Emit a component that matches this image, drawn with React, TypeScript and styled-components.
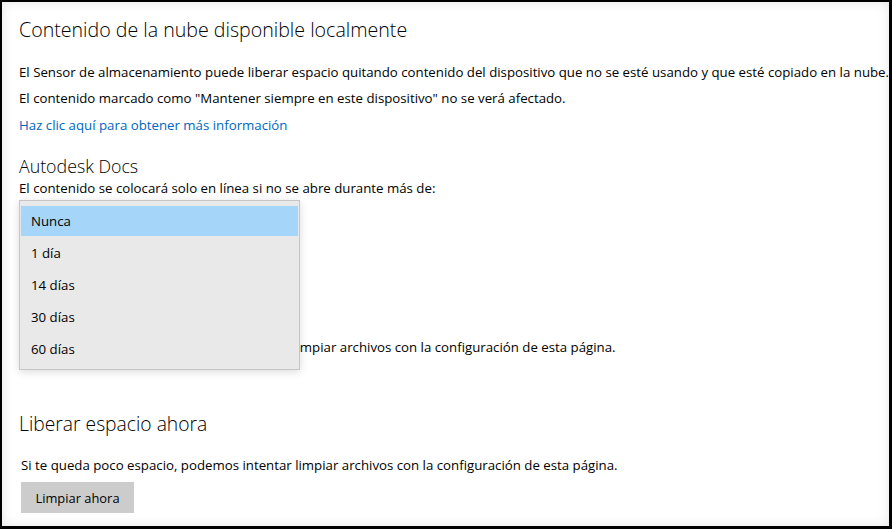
import React from "react";
import styled, { createGlobalStyle } from "styled-components";

const Global = createGlobalStyle`
  html, body { margin: 0; padding: 0; background: #fff; }
  body { font-family: "Open Sans", "Noto Sans", sans-serif; color: #000; }
`;

const Frame = styled.div`
  width: 892px;
  height: 529px;
  box-sizing: border-box;
  border-style: solid;
  border-color: #000;
  border-width: 2px 3px 3px 2px;
  overflow: hidden;
`;

const Page = styled.div`
  height: 100%;
  box-sizing: border-box;
  padding: 14px 0 0 17px;
  background: #fff;
  box-shadow: inset 0 0 12px rgba(0, 0, 0, 0.1);
  display: flex;
  flex-direction: column;
  align-items: flex-start;
`;

const Title = styled.h1<{ $top?: number; $size?: number }>`
  margin: ${(p) => p.$top ?? 0}px 0 0;
  font-size: ${(p) => p.$size ?? 19.6}px;
  line-height: 28px;
  font-weight: 300;
  white-space: nowrap;
`;

const SubTitle = styled.h2<{ $top?: number }>`
  margin: ${(p) => p.$top ?? 0}px 0 0;
  font-size: 17.8px;
  line-height: 24px;
  font-weight: 300;
  white-space: nowrap;
`;

const Text = styled.p<{ $top?: number; $indent?: number }>`
  margin: ${(p) => p.$top ?? 0}px 0 0 ${(p) => p.$indent ?? 0}px;
  font-size: 13.25px;
  line-height: 20px;
  white-space: nowrap;
`;

const Link = styled.a<{ $top?: number }>`
  margin-top: ${(p) => p.$top ?? 0}px;
  font-size: 13.25px;
  line-height: 20px;
  color: #0067c0;
  text-decoration: none;
  white-space: nowrap;
`;

const ComboWrap = styled.div<{ $top?: number }>`
  position: relative;
  margin-top: ${(p) => p.$top ?? 0}px;
  z-index: 2;
`;

const Combo = styled.div`
  width: 280px;
  height: 32px;
  box-sizing: border-box;
  border: 2px solid #999;
  background: #fff;
`;

const Menu = styled.ul`
  position: absolute;
  left: 0;
  top: -4px;
  width: 281px;
  margin: 0;
  padding: 5px 1px;
  box-sizing: border-box;
  list-style: none;
  background: #e9e9e9;
  border: 1px solid #c6c6c6;
  box-shadow: 0 2px 8px rgba(0, 0, 0, 0.14);
  display: flex;
  flex-direction: column;
  gap: 2px;
`;

const Item = styled.li<{ $selected?: boolean }>`
  height: 30px;
  line-height: 30px;
  padding-left: 10px;
  font-size: 13.25px;
  background: ${(p) => (p.$selected ? "#a6d5fa" : "transparent")};
  color: #000;
`;

const Button = styled.button<{ $top?: number }>`
  margin: ${(p) => p.$top ?? 0}px 0 0 2px;
  width: 113px;
  height: 31px;
  padding: 0;
  border: none;
  background: #cccccc;
  font-family: "Open Sans", "Noto Sans", sans-serif;
  font-size: 12.9px;
  color: #000;
`;

const options = ["Nunca", "1 día", "14 días", "30 días", "60 días"];

export default function App() {
  return (
    <>
      <Global />
      <Frame>
        <Page>
          <Title>Contenido de la nube disponible localmente</Title>
          <Text $top={18}>
            El Sensor de almacenamiento puede liberar espacio quitando contenido del dispositivo que no se esté usando y que esté copiado en la nube.
          </Text>
          <Text $top={6}>
            El contenido marcado como "Mantener siempre en este dispositivo" no se verá afectado.
          </Text>
          <Link $top={7} href="#">
            Haz clic aquí para obtener más información
          </Link>
          <SubTitle $top={19}>Autodesk Docs</SubTitle>
          <Text>El contenido se colocará solo en línea si no se abre durante más de:</Text>
          <ComboWrap $top={6}>
            <Combo />
            <Menu>
              {options.map((o, i) => (
                <Item key={o} $selected={i === 0}>
                  {o}
                </Item>
              ))}
            </Menu>
          </ComboWrap>
          <Text $top={101} $indent={0}>
            Si te queda poco espacio, podemos intentar limpiar archivos con la configuración de esta página.
          </Text>
          <Title $top={53} $size={19.3}>Liberar espacio ahora</Title>
          <Text $top={17} $indent={2}>
            Si te queda poco espacio, podemos intentar limpiar archivos con la configuración de esta página.
          </Text>
          <Button $top={7}>Limpiar ahora</Button>
        </Page>
      </Frame>
    </>
  );
}
